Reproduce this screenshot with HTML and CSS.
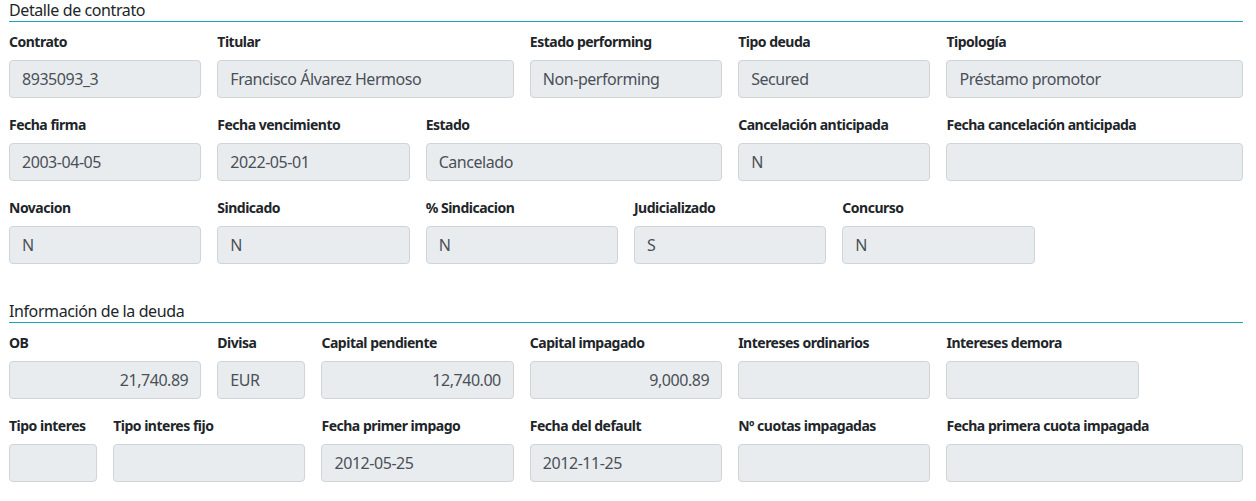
FILE: index.html
```html
<!DOCTYPE html>
<html lang="es">
<head>
<meta charset="utf-8">
<title>Detalle de contrato</title>
<link rel="stylesheet" href="styles.css">
</head>
<body>
<div class="page">
  <section class="section">
    <h2 class="section-title">Detalle de contrato</h2>
    <div class="grid">
      <div class="field c2"><label>Contrato</label><div class="control">8935093_3</div></div>
      <div class="field c3"><label>Titular</label><div class="control">Francisco Álvarez Hermoso</div></div>
      <div class="field c2"><label>Estado performing</label><div class="control">Non-performing</div></div>
      <div class="field c2"><label>Tipo deuda</label><div class="control">Secured</div></div>
      <div class="field c3"><label>Tipología</label><div class="control">Préstamo promotor</div></div>

      <div class="field c2"><label>Fecha firma</label><div class="control">2003-04-05</div></div>
      <div class="field c2"><label>Fecha vencimiento</label><div class="control">2022-05-01</div></div>
      <div class="field c3"><label>Estado</label><div class="control">Cancelado</div></div>
      <div class="field c2"><label>Cancelación anticipada</label><div class="control">N</div></div>
      <div class="field c3"><label>Fecha cancelación anticipada</label><div class="control"></div></div>

      <div class="field c2"><label>Novacion</label><div class="control">N</div></div>
      <div class="field c2"><label>Sindicado</label><div class="control">N</div></div>
      <div class="field c2"><label>% Sindicacion</label><div class="control">N</div></div>
      <div class="field c2"><label>Judicializado</label><div class="control">S</div></div>
      <div class="field c2"><label>Concurso</label><div class="control">N</div></div>
    </div>
  </section>

  <section class="section section-next">
    <h2 class="section-title">Información de la deuda</h2>
    <div class="grid">
      <div class="field c2"><label>OB</label><div class="control num">21,740.89</div></div>
      <div class="field c1"><label>Divisa</label><div class="control">EUR</div></div>
      <div class="field c2"><label>Capital pendiente</label><div class="control num">12,740.00</div></div>
      <div class="field c2"><label>Capital impagado</label><div class="control num">9,000.89</div></div>
      <div class="field c2"><label>Intereses ordinarios</label><div class="control"></div></div>
      <div class="field c2"><label>Intereses demora</label><div class="control"></div></div>
      <div class="field c1 break"><label>Tipo interes</label><div class="control"></div></div>

      <div class="field c2"><label>Tipo interes fijo</label><div class="control"></div></div>
      <div class="field c2"><label>Fecha primer impago</label><div class="control">2012-05-25</div></div>
      <div class="field c2"><label>Fecha del default</label><div class="control">2012-11-25</div></div>
      <div class="field c2"><label>Nº cuotas impagadas</label><div class="control"></div></div>
      <div class="field c3"><label>Fecha primera cuota impagada</label><div class="control"></div></div>
    </div>
  </section>
</div>
</body>
</html>
```

FILE: styles.css
```css
* { box-sizing: border-box; }

body {
  margin: 0;
  background: #fff;
  font-family: "Segoe UI", "Noto Sans", "Open Sans", sans-serif;
  color: #212529;
}

.page {
  padding: 0 13px 0 9px;
}

.section-title {
  margin: 0 0 9px 0;
  font-size: 16px;
  font-weight: 400;
  line-height: 21px;
  letter-spacing: -0.4px;
  color: #212529;
  border-bottom: 1px solid #1ea3b8;
}

.section-next {
  margin-top: 21px;
}

.grid {
  display: grid;
  grid-template-columns: repeat(12, 1fr);
  column-gap: 16px;
}

.field {
  margin-bottom: 16px;
}

.c1 { grid-column: span 1; }
.c2 { grid-column: span 2; }
.c3 { grid-column: span 3; }
.break { grid-column-start: 1; }

.field label {
  display: block;
  margin-bottom: 8px;
  font-size: 14px;
  line-height: 21px;
  font-weight: 700;
  letter-spacing: -0.5px;
  color: #212529;
  white-space: nowrap;
}

.control {
  height: 38px;
  padding: 6px 12px;
  font-size: 16px;
  line-height: 24px;
  letter-spacing: -0.45px;
  color: #495057;
  background: #e9ecef;
  border: 1px solid #ced4da;
  border-radius: 4px;
  white-space: nowrap;
  overflow: hidden;
}

.control.num {
  text-align: right;
}
```
